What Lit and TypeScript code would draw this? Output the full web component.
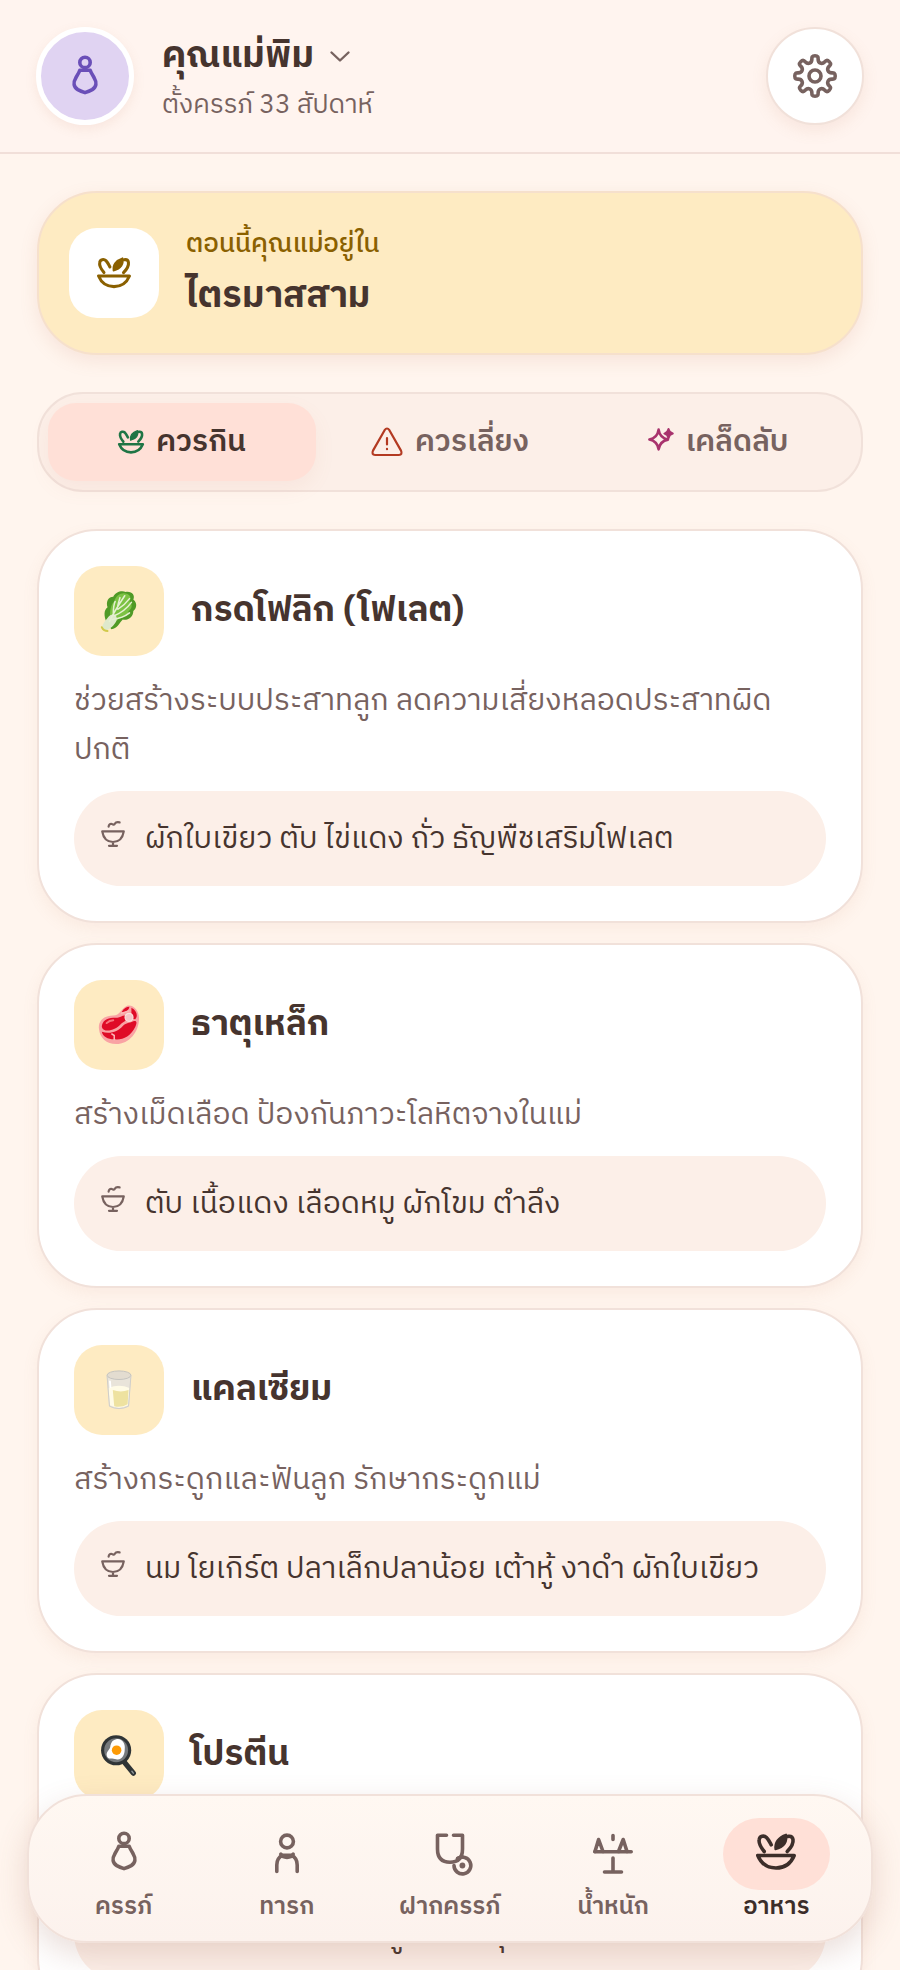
import { LitElement, html, css, svg } from "lit";
import { customElement, state } from "lit/decorators.js";

const mother = svg`<svg class="line" viewBox="0 0 40 40" aria-hidden="true">
  <circle cx="20" cy="6.4" r="5.2"/>
  <path d="M14.8 14.2H25.2C26.2 17.2 27.8 19.2 29.4 22.4C32 26.6 31.4 31 27.2 33.6Q24 35.4 20 36.6Q16 35.4 12.8 33.6C8.6 31 8 26.6 10.6 22.4C12.2 19.2 13.8 17.2 14.8 14.2Z"/>
</svg>`;
const baby = svg`<svg class="line" viewBox="0 0 40 40" aria-hidden="true">
  <circle cx="20" cy="9.5" r="6.4"/>
  <path d="M9.8 39.5V33Q9.8 26 15.5 23.4H24.5Q30.2 26 30.2 33V39.5"/>
  <path d="M13.8 22.2L15.5 24.4Q20 26.4 24.5 24.4L26.2 22.2"/>
</svg>`;
const stethoscope = svg`<svg class="line" viewBox="0 0 40 40" aria-hidden="true">
  <path d="M16.5 3.3H7.5V17Q7.5 30.2 20 30.2T32.5 17V3.3H23.5"/>
  <path d="M24 33.5A8.4 8.4 0 1 0 27.6 26.6"/>
  <path d="M27.6 26.6A8.4 8.4 0 0 1 32.4 25.1"/>
  <circle class="dot" cx="32.4" cy="33.5" r="2.9"/>
</svg>`;
const scale = svg`<svg class="line" viewBox="0 0 40 40" aria-hidden="true">
  <path d="M20 3.5V7.5M1.8 19.7H38.2M20 26V40M11.5 40H28.5"/>
  <path d="M2 19.5L5.6 7.5L10 19.5M25.5 19.5L30.2 7.5L34 19.5"/>
</svg>`;
const salad = svg`<svg class="line" viewBox="0 0 40 40" aria-hidden="true">
  <path d="M1.8 23.5H38.2Q33 36 20 36T1.8 23.5Z"/>
  <path d="M8.2 19.5C4.5 15 2.5 11 3.2 7.5C3.8 4 8 3.2 10.5 5.5C12.6 7.6 13.6 10 15.2 12.8"/>
  <path d="M31.2 19.5C35.2 15.5 37.6 11.5 37 7.5C36.6 5 34.6 4 32 4.4"/>
  <path class="leaf" d="M19.4 17.2C18.4 10.6 22.5 5 30 2.6C31.8 9 28.4 15.4 19.4 17.2Z"/>
</svg>`;
const warning = svg`<svg class="line" viewBox="0 0 32 32" aria-hidden="true">
  <path d="M13.6 4.2Q16 .8 18.4 4.2L30 24.6Q31.8 28.6 27.8 29H4.2Q.2 28.6 2 24.6ZM16 12V18.4M16 22.8V23.2"/>
</svg>`;
const sparkle = svg`<svg class="line" viewBox="0 3 26 26" aria-hidden="true">
  <path d="M10.6 3.6Q11.8 12 20 13.6Q11.8 15.2 10.6 23.4Q9.4 15.2 1.4 13.6Q9.4 12 10.6 3.6Z"/>
  <path class="leaf" d="M20.5 3Q21.2 6.8 24.8 7.6Q21.2 8.4 20.5 12.2Q19.8 8.4 16.4 7.6Q19.8 6.8 20.5 3Z"/>
</svg>`;
const bowl = svg`<svg class="line" viewBox="0 0 24 26" aria-hidden="true">
  <path d="M1.2 10.4H22.8Q21 21 12 21T1.2 10.4ZM12 21V24.6M8 24.8H16"/>
  <path d="M7.6 5.6Q8 2.4 11 3Q13 4.6 14 2.6T18.6 1.4"/>
</svg>`;
const chevron = svg`<svg class="line chev" viewBox="0 0 20 12" aria-hidden="true"><path d="M1.5 1.5L10 9.5L18.5 1.5"/></svg>`;

/** Outline of a cog: rounded teeth joined by rounded valleys. */
function cogPath(teeth: number, inner: number, outer: number): string {
  const c = 24;
  const at = (r: number, a: number, shift: number) =>
    `${(c + r * Math.cos(a) - shift * Math.sin(a)).toFixed(2)} ${(c + r * Math.sin(a) + shift * Math.cos(a)).toFixed(2)}`;
  const half = Math.PI / teeth;
  let d = `M${at(outer, 0, 0)}`;
  for (let i = 0; i < teeth; i++) {
    const tip = i * 2 * half;
    const valley = tip + half;
    const next = valley + half;
    d += `C${at(outer, tip, 6)} ${at(inner, valley, -5.2)} ${at(inner, valley, 0)}`;
    d += `C${at(inner, valley, 5.2)} ${at(outer, next, -6)} ${at(outer, next, 0)}`;
  }
  return d + "Z";
}
const cog = svg`<svg class="line cog" viewBox="0 0 48 48" aria-hidden="true">
  <path d=${cogPath(8, 14, 20.2)}/><circle cx="24" cy="24" r="6"/>
</svg>`;

const greens = svg`<svg viewBox="0 0 44 44" aria-hidden="true">
  <path fill="#4f9a26" d="M9 34C6 27 6 21 10 18C8 12 11 7 16 7C18 2 25 0 29 2C36 1 39 6 37 10C42 14 40 20 37 22C37 29 31 32 26 31C22 35 20 41 14 41Z"/>
  <path fill="#7cc243" d="M13 30C12 23 13 16 17 12C19 5 25 2 30 4C34 5 35 9 33 12C37 16 35 20 32 22C31 27 27 29 22 30L15 36Z"/>
  <path fill="#dfe9cc" d="M4 40C5 34 9 31 11 28C13 26 15 25 18 26C20 29 21 31 17 36C14 40 9 43 6 43Z"/>
  <path fill="none" stroke="#e6f0d2" stroke-width="1.6" stroke-linecap="round" d="M12 33C16 24 22 15 28 6M16 26C16 20 16 16 18 12M20 20C21 15 22 11 23 8M17 27C24 24 30 20 35 13M15 31C22 30 28 28 33 24M21 20C26 17 30 13 33 9"/>
  <path fill="none" stroke="#d2c94a" stroke-width="2" stroke-linecap="round" d="M4 39Q6 43 10 43"/>
</svg>`;
const meat = svg`<svg viewBox="0 0 44 44" aria-hidden="true">
  <path fill="#f9a3a4" d="M1 26C0 18 6 12 16 12C23 12 24 5 30 2C37 0 43 7 43 15C43 29 33 42 19 42C9 42 2 36 1 26Z"/>
  <path fill="#df0b27" d="M4 24C4 18 10 14 17 14.5C24 15 27 10 30 13C31 18 25 19 23 22C19 27 6 31 4 24Z"/>
  <path fill="#df0b27" d="M4 29C12 32 21 29 26 23C29 20 32 20 37 18C41 17 41 20 39 24C34 34 26 38 17 37C10 37 5 34 4 29Z"/>
  <path fill="#df0b27" d="M35 4C41 7 42 13 39 16Q35 16 35 11ZM25 8Q28 3 33 3Q32 8 26 9Z"/>
  <path fill="none" stroke="#fbb7b6" stroke-width="1.6" d="M14 31L17 33V38M24 10L33 7"/>
  <circle cx="32.5" cy="14" r="4.2" fill="#f4c6c8" stroke="#fbe0dc" stroke-width="1.2"/>
  <path stroke="#f7747c" stroke-width="2" stroke-linecap="round" d="M9 20Q12 17 16 17" fill="none"/>
</svg>`;
const milk = svg`<svg viewBox="0 0 44 44" aria-hidden="true">
  <path fill="#e9e4da" d="M9 6L11.5 39Q22 45 32.5 39L35 6Z"/>
  <path fill="#fffbe6" d="M11 20L12.5 38Q22 43 31.5 38L33 20Q22 15 11 20Z"/>
  <path fill="#eee2a0" d="M15.5 22L17 39Q24 41 31 37L32 22Q24 25 15.5 22Z"/>
  <ellipse cx="22" cy="6.5" rx="12.5" ry="4.5" fill="#e3dcd0" stroke="#c3c2be"/>
  <path fill="none" stroke="#cfcdc7" d="M9.5 7L12 39Q22 44 32 39L34.5 7"/>
  <path stroke="#fff" stroke-width="2" stroke-linecap="round" d="M12.5 13L13 19"/>
</svg>`;
const pan = svg`<svg viewBox="0 0 44 44" aria-hidden="true">
  <path stroke="#2f3436" stroke-width="5.5" stroke-linecap="round" d="M28 30L37 41"/>
  <path stroke="#8f979a" stroke-width="1.5" stroke-linecap="round" d="M35.5 39L37 41"/>
  <circle cx="19" cy="17" r="15.8" fill="#2f3436"/>
  <circle cx="19" cy="17" r="12.5" fill="#75797c"/>
  <path fill="#fff" d="M19 5.5C25 4 29 10 28 16C28 22 25 28 19 26.5C16 25 10 28 9 22C9 17 13 17 13 12C14 8 16 6 19 5.5Z"/>
  <circle cx="19.5" cy="17" r="5" fill="#fd9b06"/>
</svg>`;

const nutrients = [
  { art: greens, name: "กรดโฟลิก (โฟเลต)", benefit: "ช่วยสร้างระบบประสาทลูก ลดความเสี่ยงหลอดประสาทผิดปกติ", foods: "ผักใบเขียว ตับ ไข่แดง ถั่ว ธัญพืชเสริมโฟเลต" },
  { art: meat, name: "ธาตุเหล็ก", benefit: "สร้างเม็ดเลือด ป้องกันภาวะโลหิตจางในแม่", foods: "ตับ เนื้อแดง เลือดหมู ผักโขม ตำลึง" },
  { art: milk, name: "แคลเซียม", benefit: "สร้างกระดูกและฟันลูก รักษากระดูกแม่", foods: "นม โยเกิร์ต ปลาเล็กปลาน้อย เต้าหู้ งาดำ ผักใบเขียว" },
  { art: pan, name: "โปรตีน", benefit: "สร้างเนื้อเยื่อและกล้ามเนื้อลูก", foods: "ไข่ เนื้อสัตว์ ปลา เต้าหู้ นม ถั่วทุกชนิด" },
];
const tabs = [
  { icon: salad, label: "ควรกิน", tone: "green" },
  { icon: warning, label: "ควรเลี่ยง", tone: "red" },
  { icon: sparkle, label: "เคล็ดลับ", tone: "plum" },
];
const sections = [
  { icon: mother, label: "ครรภ์" },
  { icon: baby, label: "ทารก" },
  { icon: stethoscope, label: "ฝากครรภ์" },
  { icon: scale, label: "น้ำหนัก" },
  { icon: salad, label: "อาหาร" },
];

@customElement("app-root")
export class AppRoot extends LitElement {
  @state() private tab = 0;
  @state() private section = 4;

  static styles = css`
    :host {
      --ink: #46342e;
      --muted: #77625f;
      --edge: #f1e1da;
      --butter: #feebc2;
      --blush: #ffe0d7;
      --sand: #fcefe8;
      display: block;
      position: relative;
      height: 100vh;
      overflow: hidden;
      background: #fff5ee;
      color: var(--ink);
      font-family: "IBM Plex Sans Thai", "IBM Plex Sans Thai Looped", "Noto Sans Thai", "Noto Sans", sans-serif;
      font-size: 30px;
    }
    * { box-sizing: border-box; }
    h1, h2, p { margin: 0; }
    button { font: inherit; color: inherit; border: 0; background: none; padding: 0; cursor: pointer; }
    svg { display: block; flex: none; overflow: visible; }
    .line { fill: none; stroke: currentColor; stroke-width: 3.6; stroke-linecap: round; stroke-linejoin: round; }
    .dot { fill: currentColor; stroke: none; }
    .leaf { fill: currentColor; stroke-width: 2; }
    .screen { height: 100%; display: flex; flex-direction: column; }
    .top {
      flex: none;
      display: flex;
      align-items: center;
      gap: 28px;
      padding: 26px 36px;
      border-bottom: 2px solid #f1dfd9;
      background: #fff4ef;
    }
    .avatar {
      flex: none;
      display: grid;
      place-items: center;
      width: 98px;
      height: 98px;
      border: 5px solid #fff;
      border-radius: 50%;
      background: #e0d3f2;
      color: #6a4fb8;
      box-shadow: 0 4px 12px rgb(200 130 100 / 12%);
    }
    .avatar svg { width: 40px; height: 40px; }
    .who { flex: 1; padding-top: 2px; }
    .name { display: flex; align-items: center; gap: 16px; font-size: 36px; line-height: 58px; font-weight: 700; }
    .chev { width: 20px; height: 12px; color: var(--muted); stroke-width: 2.4; }
    .week { color: var(--muted); font-size: 26px; line-height: 40px; }
    .gear {
      display: grid;
      place-items: center;
      width: 98px;
      height: 98px;
      border: 2px solid var(--edge);
      border-radius: 50%;
      background: #fff;
      color: #77625f;
      box-shadow: 0 6px 16px rgb(200 130 100 / 12%);
    }
    .cog { width: 48px; height: 48px; }
    main {
      flex: 1;
      min-height: 0;
      overflow: auto;
      scrollbar-width: none;
      padding: 37px 37px 220px;
      display: flex;
      flex-direction: column;
      gap: 37px;
    }
    main > * { flex: none; }
    .banner {
      display: flex;
      align-items: center;
      gap: 27px;
      padding: 28px 30px;
      border: 2px solid #f6e0cc;
      border-radius: 60px;
      background: var(--butter);
      box-shadow: 0 6px 18px rgb(200 130 100 / 14%);
    }
    .now { padding-top: 4px; }
    .tile { flex: none; display: grid; place-items: center; width: 90px; height: 90px; border-radius: 28px; background: var(--butter); }
    .tile svg { width: 42px; height: 42px; }
    .banner .tile { background: #fff; color: #8a6000; }
    .banner .tile svg { width: 34px; height: 34px; }
    .lead { color: #8a6000; font-size: 26px; line-height: 40px; font-weight: 500; margin-bottom: 4px; }
    .stage { font-size: 36px; line-height: 56px; font-weight: 700; }
    .tabs {
      display: grid;
      grid-template-columns: repeat(3, 1fr);
      padding: 9px;
      border: 2px solid var(--edge);
      border-radius: 46px;
      background: var(--sand);
    }
    .tab {
      display: flex;
      align-items: center;
      justify-content: center;
      gap: 12px;
      height: 78px;
      border-radius: 28px;
      color: var(--muted);
      font-size: 30px;
      font-weight: 600;
    }
    .tab[aria-selected="true"] { background: var(--blush); color: var(--ink); box-shadow: 0 8px 20px rgb(200 130 100 / 8%); }
    .tab svg { width: 26px; height: 26px; }
    .green { color: #1f7545; }
    .green svg { stroke-width: 4; }
    .red { color: #b33a22; }
    .tab .red svg { width: 32px; height: 32px; stroke-width: 2.2; }
    .plum { color: #a8336d; }
    .plum svg { stroke-width: 2.6; }
    .list { display: flex; flex-direction: column; gap: 20px; }
    .card {
      padding: 35px;
      border: 2px solid var(--edge);
      border-radius: 60px;
      background: #fff;
      box-shadow: 0 6px 16px rgb(200 130 100 / 9%);
    }
    .head { display: flex; align-items: center; gap: 27px; }
    .title { font-size: 35px; line-height: 52px; font-weight: 700; }
    .benefit { margin: 21px 0 16px; padding-right: 28px; color: var(--muted); line-height: 49px; }
    .foods {
      display: flex;
      align-items: flex-start;
      gap: 20px;
      padding: 25px 27px 22px;
      border-radius: 48px;
      background: var(--sand);
      line-height: 48px;
    }
    .foods svg { width: 24px; height: 26px; margin-top: 5px; color: var(--muted); stroke-width: 2.2; }
    .dock {
      position: absolute;
      left: 27px;
      right: 27px;
      bottom: 27px;
      display: grid;
      grid-template-columns: repeat(5, 1fr);
      padding: 22px 13px 17px;
      border: 2px solid var(--edge);
      border-radius: 60px;
      background: linear-gradient(#fff8f2, #fcf2ed);
      box-shadow: 0 12px 32px rgb(150 90 70 / 20%);
    }
    .item { display: flex; flex-direction: column; align-items: center; color: var(--muted); font-size: 24px; line-height: 34px; font-weight: 600; }
    .blob { display: grid; place-items: start center; width: 107px; height: 72px; padding-top: 14px; border-radius: 36px; }
    .blob svg { width: 40px; height: 40px; }
    .item[aria-current="page"] { color: #3c2e2a; }
    .item[aria-current="page"] .blob { background: var(--blush); }
  `;

  render() {
    return html`
      <div class="screen">
        <header class="top">
          <div class="avatar">${mother}</div>
          <div class="who">
            <button class="name">คุณแม่พิม ${chevron}</button>
            <p class="week">ตั้งครรภ์ 33 สัปดาห์</p>
          </div>
          <button class="gear" aria-label="ตั้งค่า">${cog}</button>
        </header>
        <main>
          <section class="banner">
            <div class="tile">${salad}</div>
            <div class="now">
              <p class="lead">ตอนนี้คุณแม่อยู่ใน</p>
              <h1 class="stage">ไตรมาสสาม</h1>
            </div>
          </section>
          <div class="tabs" role="tablist">
            ${tabs.map(
              (t, i) => html`<button class="tab" role="tab" aria-selected=${i === this.tab} @click=${() => (this.tab = i)}>
                <span class=${t.tone}>${t.icon}</span>${t.label}
              </button>`
            )}
          </div>
          <div class="list">
            ${nutrients.map(
              (n) => html`<article class="card">
                <div class="head"><div class="tile">${n.art}</div><h2 class="title">${n.name}</h2></div>
                <p class="benefit">${n.benefit}</p>
                <div class="foods">${bowl}<span>${n.foods}</span></div>
              </article>`
            )}
          </div>
        </main>
      </div>
      <nav class="dock">
        ${sections.map(
          (s, i) => html`<button class="item" aria-current=${i === this.section ? "page" : "false"} @click=${() => (this.section = i)}>
            <span class="blob">${s.icon}</span>${s.label}
          </button>`
        )}
      </nav>
    `;
  }
}
